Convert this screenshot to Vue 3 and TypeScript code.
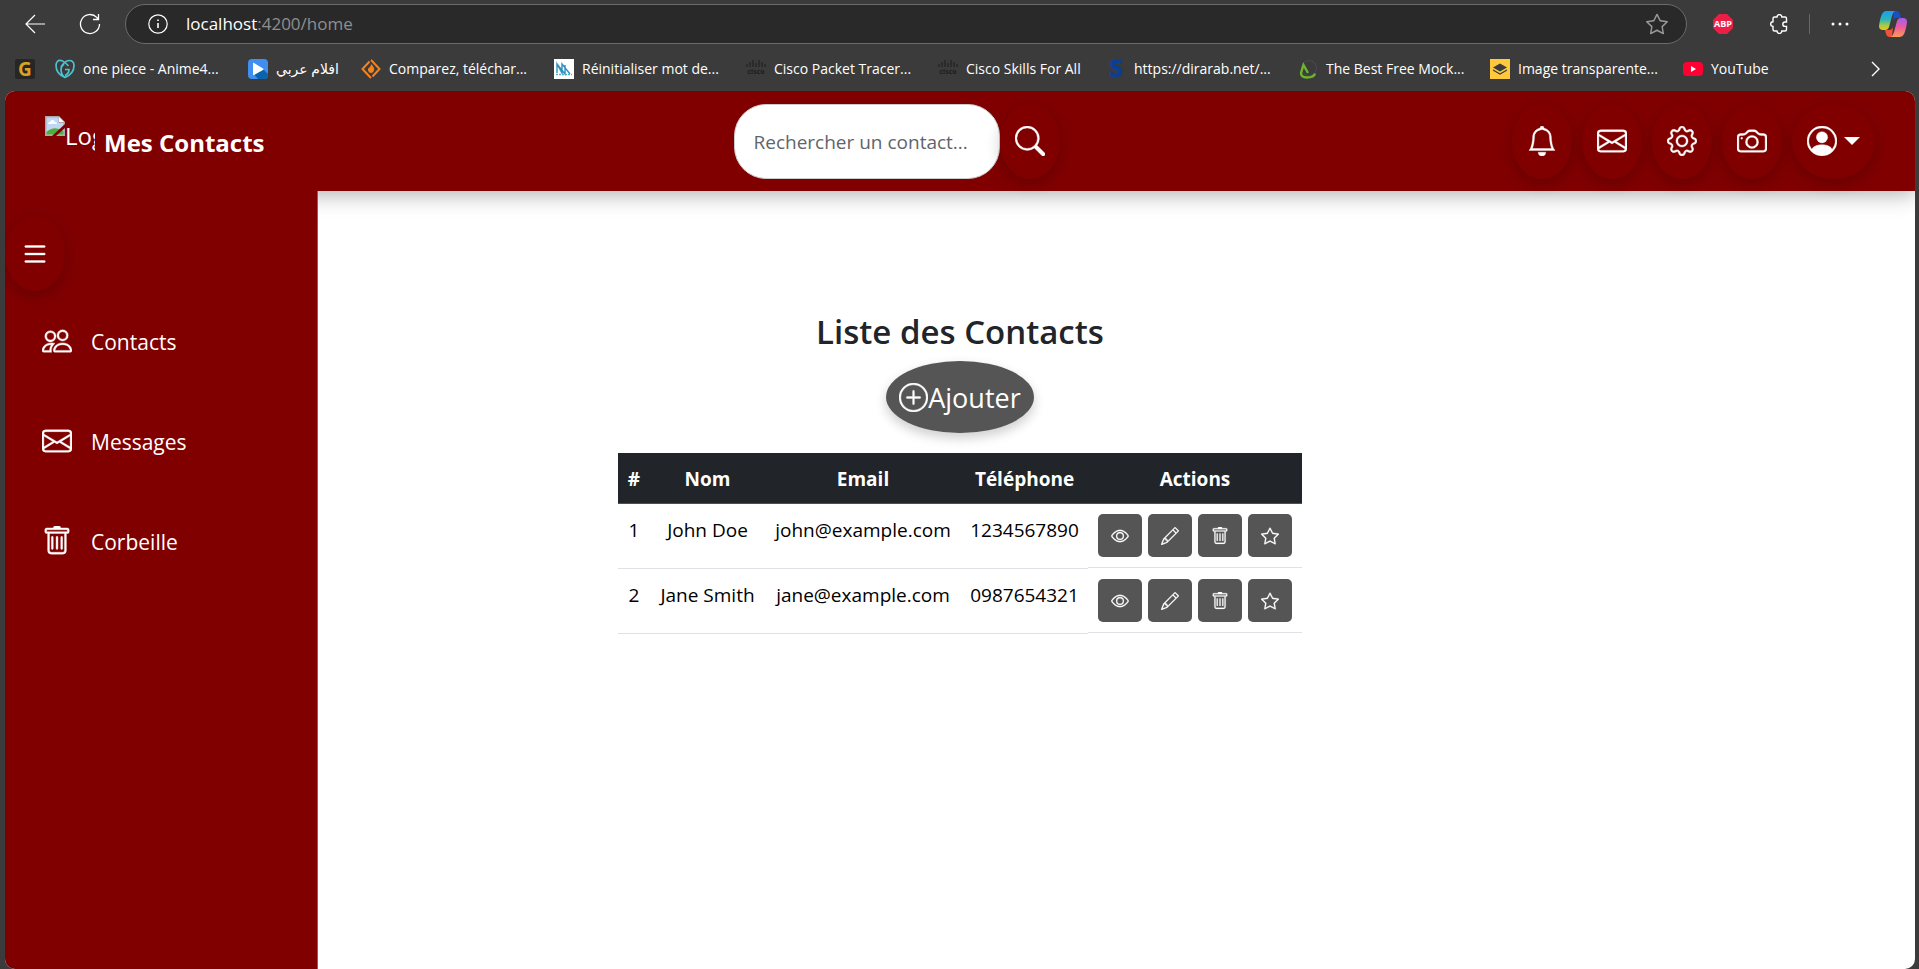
<script setup lang="ts">
import { ref } from 'vue'

interface Contact {
  id: number
  name: string
  email: string
  phone: string
}

interface Bookmark {
  label: string
  icon: string
  width: number
}

const icons: Record<string, string[]> = {
  list: ['M2.5 12a.5.5 0 0 1 .5-.5h10a.5.5 0 0 1 0 1H3a.5.5 0 0 1-.5-.5m0-4a.5.5 0 0 1 .5-.5h10a.5.5 0 0 1 0 1H3a.5.5 0 0 1-.5-.5m0-4a.5.5 0 0 1 .5-.5h10a.5.5 0 0 1 0 1H3a.5.5 0 0 1-.5-.5'],
  search: ['M11.742 10.344a6.5 6.5 0 1 0-1.397 1.398h-.001q.044.06.098.115l3.85 3.85a1 1 0 0 0 1.415-1.414l-3.85-3.85a1 1 0 0 0-.115-.1zM12 6.5a5.5 5.5 0 1 1-11 0 5.5 5.5 0 0 1 11 0'],
  bell: ['M8 16a2 2 0 0 0 2-2H6a2 2 0 0 0 2 2M8 1.918l-.797.161A4 4 0 0 0 4 6c0 .628-.134 2.197-.459 3.742-.16.767-.376 1.566-.663 2.258h10.244c-.287-.692-.502-1.49-.663-2.258C12.134 8.197 12 6.628 12 6a4 4 0 0 0-3.203-3.92zM14.22 12c.223.447.481.801.78 1H1c.299-.199.557-.553.78-1C2.68 10.2 3 6.88 3 6c0-2.42 1.72-4.44 4.005-4.901a1 1 0 1 1 1.99 0A5 5 0 0 1 13 6c0 .88.32 4.2 1.22 6'],
  envelope: ['M0 4a2 2 0 0 1 2-2h12a2 2 0 0 1 2 2v8a2 2 0 0 1-2 2H2a2 2 0 0 1-2-2zm2-1a1 1 0 0 0-1 1v.217l7 4.2 7-4.2V4a1 1 0 0 0-1-1zm13 2.383-4.708 2.825L15 11.105zm-.034 6.876-5.64-3.471L8 9.583l-1.326-.795-5.64 3.47A1 1 0 0 0 2 13h12a1 1 0 0 0 .966-.741M1 11.105l4.708-2.897L1 5.383z'],
  gear: [
    'M8 4.754a3.246 3.246 0 1 0 0 6.492 3.246 3.246 0 0 0 0-6.492M5.754 8a2.246 2.246 0 1 1 4.492 0 2.246 2.246 0 0 1-4.492 0',
    'M9.796 1.343c-.527-1.79-3.065-1.79-3.592 0l-.094.319a.873.873 0 0 1-1.255.52l-.292-.16c-1.64-.892-3.433.902-2.54 2.541l.159.292a.873.873 0 0 1-.52 1.255l-.319.094c-1.79.527-1.79 3.065 0 3.592l.319.094a.873.873 0 0 1 .52 1.255l-.16.292c-.892 1.64.901 3.434 2.541 2.54l.292-.159a.873.873 0 0 1 1.255.52l.094.319c.527 1.79 3.065 1.79 3.592 0l.094-.319a.873.873 0 0 1 1.255-.52l.292.16c1.64.893 3.434-.902 2.54-2.541l-.159-.292a.873.873 0 0 1 .52-1.255l.319-.094c1.79-.527 1.79-3.065 0-3.592l-.319-.094a.873.873 0 0 1-.52-1.255l.16-.292c.893-1.64-.902-3.433-2.541-2.54l-.292.159a.873.873 0 0 1-1.255-.52zm-2.633.283c.246-.835 1.428-.835 1.674 0l.094.319a1.873 1.873 0 0 0 2.693 1.115l.291-.16c.764-.415 1.6.42 1.184 1.185l-.159.292a1.873 1.873 0 0 0 1.116 2.692l.318.094c.835.246.835 1.428 0 1.674l-.319.094a1.873 1.873 0 0 0-1.115 2.693l.16.291c.415.764-.42 1.6-1.185 1.184l-.291-.159a1.873 1.873 0 0 0-2.693 1.116l-.094.318c-.246.835-1.428.835-1.674 0l-.094-.319a1.873 1.873 0 0 0-2.692-1.115l-.292.16c-.764.415-1.6-.42-1.184-1.185l.159-.291A1.873 1.873 0 0 0 1.945 8.93l-.319-.094c-.835-.246-.835-1.428 0-1.674l.319-.094A1.873 1.873 0 0 0 3.06 4.377l-.16-.292c-.415-.764.42-1.6 1.185-1.184l.292.159a1.873 1.873 0 0 0 2.692-1.115z',
  ],
  camera: [
    'M15 12a1 1 0 0 1-1 1H2a1 1 0 0 1-1-1V6a1 1 0 0 1 1-1h1.172a3 3 0 0 0 2.12-.879l.83-.828A1 1 0 0 1 6.827 3h2.344a1 1 0 0 1 .707.293l.828.828A3 3 0 0 0 12.828 5H14a1 1 0 0 1 1 1zM2 4a2 2 0 0 0-2 2v6a2 2 0 0 0 2 2h12a2 2 0 0 0 2-2V6a2 2 0 0 0-2-2h-1.172a2 2 0 0 1-1.414-.586l-.828-.828A2 2 0 0 0 9.172 2H6.828a2 2 0 0 0-1.414.586l-.828.828A2 2 0 0 1 3.172 4z',
    'M8 11a2.5 2.5 0 1 1 0-5 2.5 2.5 0 0 1 0 5m0 1a3.5 3.5 0 1 0 0-7 3.5 3.5 0 0 0 0 7M3 6.5a.5.5 0 1 1-1 0 .5.5 0 0 1 1 0',
  ],
  person: [
    'M11 6a3 3 0 1 1-6 0 3 3 0 0 1 6 0',
    'M0 8a8 8 0 1 1 16 0A8 8 0 0 1 0 8m8-7a7 7 0 0 0-5.468 11.37C3.242 11.226 4.805 10 8 10s4.757 1.225 5.468 2.37A7 7 0 0 0 8 1',
  ],
  people: ['M15 14s1 0 1-1-1-4-5-4-5 3-5 4 1 1 1 1zm-7.978-1L7 12.996c.001-.264.167-1.03.76-1.72C8.312 10.629 9.282 10 11 10c1.717 0 2.687.63 3.24 1.276.593.69.758 1.457.76 1.72l-.008.002-.014.002zM11 7a2 2 0 1 0 0-4 2 2 0 0 0 0 4m3-2a3 3 0 1 1-6 0 3 3 0 0 1 6 0M6.936 9.28a6 6 0 0 0-1.23-.247A7 7 0 0 0 5 9c-4 0-5 3-5 4q0 1 1 1h4.216A2.24 2.24 0 0 1 5 13c0-1.01.377-2.042 1.09-2.904.243-.294.526-.569.846-.816M4.92 10A5.5 5.5 0 0 0 4 13H1c0-.26.164-1.03.76-1.724.545-.636 1.492-1.256 3.16-1.275ZM1.5 5.5a3 3 0 1 1 6 0 3 3 0 0 1-6 0m3-2a2 2 0 1 0 0 4 2 2 0 0 0 0-4'],
  trash: [
    'M5.5 5.5A.5.5 0 0 1 6 6v6a.5.5 0 0 1-1 0V6a.5.5 0 0 1 .5-.5m2.5 0a.5.5 0 0 1 .5.5v6a.5.5 0 0 1-1 0V6a.5.5 0 0 1 .5-.5m3 .5a.5.5 0 0 0-1 0v6a.5.5 0 0 0 1 0z',
    'M14.5 3a1 1 0 0 1-1 1H13v9a2 2 0 0 1-2 2H5a2 2 0 0 1-2-2V4h-.5a1 1 0 0 1-1-1V2a1 1 0 0 1 1-1H6a1 1 0 0 1 1-1h2a1 1 0 0 1 1 1h3.5a1 1 0 0 1 1 1zM4.118 4 4 4.059V13a1 1 0 0 0 1 1h6a1 1 0 0 0 1-1V4.059L11.882 4zM2.5 3h11V2h-11z',
  ],
  plus: [
    'M8 15A7 7 0 1 1 8 1a7 7 0 0 1 0 14m0 1A8 8 0 1 0 8 0a8 8 0 0 0 0 16',
    'M8 4a.5.5 0 0 1 .5.5v3h3a.5.5 0 0 1 0 1h-3v3a.5.5 0 0 1-1 0v-3h-3a.5.5 0 0 1 0-1h3v-3A.5.5 0 0 1 8 4',
  ],
  eye: [
    'M16 8s-3-5.5-8-5.5S0 8 0 8s3 5.5 8 5.5S16 8 16 8M1.173 8a13 13 0 0 1 1.66-2.043C4.12 4.668 5.88 3.5 8 3.5s3.879 1.168 5.168 2.457A13 13 0 0 1 14.828 8q-.086.13-.195.288c-.335.48-.83 1.12-1.465 1.755C11.879 11.332 10.119 12.5 8 12.5s-3.879-1.168-5.168-2.457A13 13 0 0 1 1.172 8z',
    'M8 5.5a2.5 2.5 0 1 0 0 5 2.5 2.5 0 0 0 0-5M4.5 8a3.5 3.5 0 1 1 7 0 3.5 3.5 0 0 1-7 0',
  ],
  pencil: ['M12.146.146a.5.5 0 0 1 .708 0l3 3a.5.5 0 0 1 0 .708l-10 10a.5.5 0 0 1-.168.11l-5 2a.5.5 0 0 1-.65-.65l2-5a.5.5 0 0 1 .11-.168zM11.207 2.5 13.5 4.793 14.793 3.5 12.5 1.207zm1.586 3L10.5 3.207 4 9.707V10h.5a.5.5 0 0 1 .5.5v.5h.5a.5.5 0 0 1 .5.5v.5h.293zm-9.761 5.175-.106.106-1.528 3.821 3.821-1.528.106-.106A.5.5 0 0 1 5 12.5V12h-.5a.5.5 0 0 1-.5-.5V11h-.5a.5.5 0 0 1-.468-.325'],
  star: ['M2.866 14.85c-.078.444.36.791.746.593l4.39-2.256 4.389 2.256c.386.198.824-.149.746-.592l-.83-4.73 3.522-3.356c.33-.314.16-.888-.282-.95l-4.898-.696L8.465.792a.513.513 0 0 0-.927 0L5.354 5.12l-4.898.696c-.441.062-.612.636-.283.95l3.523 3.356-.83 4.73zm4.905-2.767-3.686 1.894.694-3.957a.56.56 0 0 0-.163-.505L1.71 6.745l4.052-.576a.53.53 0 0 0 .393-.288L8 2.223l1.847 3.658a.53.53 0 0 0 .393.288l4.052.575-2.906 2.77a.56.56 0 0 0-.163.506l.694 3.957-3.686-1.894a.5.5 0 0 0-.461 0z'],
}

const bookmarks: Bookmark[] = [
  { label: 'one piece - Anime4...', icon: 'heart', width: 193 },
  { label: 'افلام عربي', icon: 'play', width: 113 },
  { label: 'Comparez, téléchar...', icon: 'flame', width: 193 },
  { label: 'Réinitialiser mot de...', icon: 'chart', width: 192 },
  { label: 'Cisco Packet Tracer...', icon: 'cisco', width: 192 },
  { label: 'Cisco Skills For All', icon: 'cisco', width: 168 },
  { label: 'https://dirarab.net/...', icon: 's', width: 192 },
  { label: 'The Best Free Mock...', icon: 'green', width: 192 },
  { label: 'Image transparente...', icon: 'layers', width: 193 },
  { label: 'YouTube', icon: 'youtube', width: 90 },
]

const headerActions = [
  { icon: 'bell', label: 'Notifications' },
  { icon: 'envelope', label: 'Messages' },
  { icon: 'gear', label: 'Paramètres' },
  { icon: 'camera', label: 'Caméra' },
]

const menu = [
  { icon: 'people', label: 'Contacts' },
  { icon: 'envelope', label: 'Messages' },
  { icon: 'trash', label: 'Corbeille' },
]

const rowActions = [
  { icon: 'eye', label: 'Voir' },
  { icon: 'pencil', label: 'Modifier' },
  { icon: 'trash', label: 'Supprimer' },
  { icon: 'star', label: 'Favori' },
]

const contacts = ref<Contact[]>([
  { id: 1, name: 'John Doe', email: 'john@example.com', phone: '1234567890' },
  { id: 2, name: 'Jane Smith', email: 'jane@example.com', phone: '0987654321' },
])

const query = ref('')
</script>

<template>
  <div class="window">
    <div class="toolbar">
      <button class="tool back" aria-label="Retour">
        <svg width="20" height="20" viewBox="0 0 20 20" fill="none" stroke="#fff" stroke-width="1.2"><path d="M10 1 1 10l9 9M1 10h19" /></svg>
      </button>
      <button class="tool reload" aria-label="Actualiser">
        <svg width="22" height="22" viewBox="0 0 22 22" fill="none" stroke="#fff" stroke-width="1.3"><path d="M20.500 11a9.500 9.500 0 1 1-2.700-6.600L19 6M19.500 1v5.500H14" /></svg>
      </button>
      <div class="address">
        <svg width="20" height="20" viewBox="0 0 20 20" fill="none" stroke="#fff" stroke-width="1.2"><circle cx="10" cy="10" r="9.200" /><path d="M10 9v5M10 5.500v1.600" stroke-width="1.600" /></svg>
        <span class="url"><span class="host">localhost</span>:4200/home</span>
        <svg class="fav" width="22" height="22" viewBox="0 0 16 16" fill="#999"><path :d="icons.star[0]" /></svg>
      </div>
      <button class="tool abp" aria-label="Adblock">
        <svg width="20" height="20" viewBox="0 0 20 20"><path d="M6 0h8l6 6v8l-6 6H6l-6-6V6z" fill="#ed1e45" /><text x="10" y="13" text-anchor="middle" class="abp-text">ABP</text></svg>
      </button>
      <button class="tool puzzle" aria-label="Extensions">
        <svg width="20" height="20" viewBox="0 0 20 20" fill="none" stroke="#fff" stroke-width="1.400"><path d="M5.500 3H8a2.400 2.400 0 0 1 4.800 0h3.200q1.500 0 1.500 1.500V8h-1.500a2.200 2.200 0 0 0 0 4.400h1.500v3.100q0 1.500-1.500 1.500h-3.200a2.400 2.400 0 0 1-4.800 0H5.500Q4 17 4 15.500v-3.100a2.300 2.300 0 0 1 0-4.600V4.500Q4 3 5.500 3" /></svg>
      </button>
      <span class="divider"></span>
      <button class="tool dots" aria-label="Plus">
        <svg width="18" height="4" viewBox="0 0 18 4" fill="#fff"><circle cx="2" cy="2" r="1.500" /><circle cx="9" cy="2" r="1.500" /><circle cx="16" cy="2" r="1.500" /></svg>
      </button>
      <button class="tool copilot" aria-label="Copilot">
        <svg width="28" height="26" viewBox="0 0 28 26">
          <defs>
            <linearGradient id="cpa" x1="0" y1="0" x2="0" y2="1"><stop offset="0" stop-color="#1c9df0" /><stop offset=".45" stop-color="#2bb5b8" /><stop offset=".75" stop-color="#a5c94a" /><stop offset="1" stop-color="#f5c518" /></linearGradient>
            <linearGradient id="cpb" x1="0" y1="0" x2="0" y2="1"><stop offset="0" stop-color="#a45cf0" /><stop offset=".5" stop-color="#ee5d9a" /><stop offset="1" stop-color="#ff9a52" /></linearGradient>
          </defs>
          <path d="M15 0h3q2 0 3 3l1 4h-5q-2 0-3 3z" fill="#1b4fc4" />
          <path d="M7 0h9q-2 1-3 5l-3 11q-1 3-4 3H4q-4 0-4-4Q1 7 3 3 4.500 0 7 0z" fill="url(#cpa)" />
          <path d="M13 26H10q-2 0-3-3l-1-4h4q3 0 4-3z" fill="#f0523c" />
          <path d="M21 26h-9q2-1 3-5l3-11q1-3 4-3h2q4 0 4 4-1 8-3 12-1.500 3-4 3z" fill="url(#cpb)" />
        </svg>
      </button>
    </div>

    <nav class="bookmarks" aria-label="Favoris">
      <a class="bookmark g-mark" href="#" aria-label="G"><span class="g-icon">G</span></a>
      <a v-for="b in bookmarks" :key="b.label" class="bookmark" href="#" :style="{ width: b.width + 'px' }">
        <svg class="favicon" viewBox="0 0 20 20" width="20" height="20">
          <g v-if="b.icon === 'heart'" fill="none" stroke="#4cc3d0" stroke-width="1.700">
            <path d="M10 18.500C4 16 1 11 1 6.500 1 3 3 1 6 1.500q3 .5 7.500 5.500M6 8q4-6.500 8-6.500c3.500 0 5 2 5 5 0 5-3 9.500-9 12-3-2-4-5-4-8 0-2 1-4 3-5.500M10 10.500h4q0 4-4 6" />
          </g>
          <g v-else-if="b.icon === 'play'">
            <rect width="20" height="20" rx="4" fill="#3f8ff0" /><path d="M6 15 15 10l5 5v1a4 4 0 0 1-4 4h-6z" fill="#0a63ad" /><path d="M5 4.500v11q0 1 1 .5l9-5q1-1 0-1.500L6 4q-1-.5-1 .5z" fill="#fff" />
          </g>
          <g v-else-if="b.icon === 'flame'">
            <path d="M8.500 2.500 1.500 10l7 7.500M11.500 2.500l7 7.500-7 7.500M10 1l2.500 2.500M7.500 16.500 10 19" fill="none" stroke="#f58220" stroke-width="2" /><path d="M10 5q4 3.500 3 6.500-1 2.500-3 2.500t-3-2.500Q6.500 9 8.500 8.500 10 7.500 10 5z" fill="#f58220" />
          </g>
          <g v-else-if="b.icon === 'chart'">
            <rect width="20" height="20" fill="#fff" /><path d="M3 14V5l5 9V5l8 10M3 5l8 10V6" fill="none" stroke="#2f8fc0" stroke-width="1.400" /><path d="M2 15.500h16" stroke="#4db6c4" stroke-width="1.400" stroke-dasharray="2 1" />
          </g>
          <g v-else-if="b.icon === 'cisco'" fill="#1d1d1d">
            <path d="M1 5v3M4 3v5M7 1v7M10 4v4M13 1v7M16 3v5M19 5v3" stroke="#1d1d1d" stroke-width="1" /><text x="10" y="15" text-anchor="middle" class="cisco-text">cisco</text>
          </g>
          <text v-else-if="b.icon === 's'" x="10" y="18" text-anchor="middle" class="s-text">S</text>
          <g v-else-if="b.icon === 'green'" fill="none">
            <circle cx="11" cy="9" r="7.500" stroke="#4a4a4a" /><path d="M10 14 5.500 6 3 14q0 4.500 6 4.500 7 0 8-4" stroke="#6cb52d" stroke-width="2.400" />
          </g>
          <g v-else-if="b.icon === 'layers'">
            <rect width="20" height="20" fill="#ffc83d" /><path d="m10 4.500 7 4-7 4-7-4z" fill="#3b3b3b" /><path d="m3 11 7 4 7-4" fill="none" stroke="#3b3b3b" stroke-width="1.200" />
          </g>
          <g v-else>
            <rect y="3" width="20" height="14" rx="4" fill="#ff0033" /><path d="M8 7v6l5-3z" fill="#fff" />
          </g>
        </svg>
        <span>{{ b.label }}</span>
      </a>
      <button class="tool more" aria-label="Autres favoris">
        <svg width="10" height="16" viewBox="0 0 10 16" fill="none" stroke="#fff" stroke-width="1.400"><path d="m1 1 7 7-7 7" /></svg>
      </button>
    </nav>

    <div class="page">
      <header class="header">
        <a class="brand" href="#">
          <span class="logo">
            <svg width="20" height="20" viewBox="0 0 20 20">
              <path d="M0 0h14l6 6v14H0z" fill="#a9a9a9" /><path d="M1.500 1.500h12V7h5v11.500h-17z" fill="#bfd6f5" /><path d="M14 1v5h5z" fill="#fff" /><path d="M3 8q0-2 2-2 .5-2 2.500-2T10 6q2 0 2 2z" fill="#fff" /><path d="M1.500 18.500V16Q9 9 18.500 15v3.500z" fill="#4fb13c" /><path d="M20 8v4l-9 8H7z" fill="maroon" />
            </svg>
            <span class="alt">Log</span>
          </span>
          <strong>Mes Contacts</strong>
        </a>

        <form class="search" @submit.prevent>
          <input v-model="query" type="text" placeholder="Rechercher un contact..." aria-label="Rechercher un contact" />
          <button class="round" type="submit" aria-label="Rechercher">
            <svg class="icon" viewBox="0 0 16 16"><path v-for="d in icons.search" :key="d" :d="d" /></svg>
          </button>
        </form>

        <div class="actions">
          <button v-for="a in headerActions" :key="a.icon" class="round" :aria-label="a.label">
            <svg class="icon" viewBox="0 0 16 16"><path v-for="d in icons[a.icon]" :key="d" :d="d" /></svg>
          </button>
          <button class="round user" aria-label="Profil">
            <svg class="icon" viewBox="0 0 16 16"><path v-for="d in icons.person" :key="d" :d="d" fill-rule="evenodd" /></svg>
            <span class="caret"></span>
          </button>
        </div>
      </header>

      <div class="body">
        <aside class="sidebar">
          <button class="round" aria-label="Menu">
            <svg class="icon" viewBox="0 0 16 16"><path v-for="d in icons.list" :key="d" :d="d" /></svg>
          </button>
          <a v-for="m in menu" :key="m.label" class="item" href="#">
            <svg class="icon" viewBox="0 0 16 16"><path v-for="d in icons[m.icon]" :key="d" :d="d" /></svg>
            <span>{{ m.label }}</span>
          </a>
        </aside>

        <main class="content">
          <h2>Liste des Contacts</h2>
          <button class="add">
            <svg class="icon" viewBox="0 0 16 16"><path v-for="d in icons.plus" :key="d" :d="d" /></svg>
            <span>Ajouter</span>
          </button>
          <table>
            <colgroup>
              <col class="c-id" /><col class="c-name" /><col class="c-email" /><col class="c-phone" /><col class="c-actions" />
            </colgroup>
            <thead>
              <tr><th>#</th><th>Nom</th><th>Email</th><th>Téléphone</th><th>Actions</th></tr>
            </thead>
            <tbody>
              <tr v-for="c in contacts" :key="c.id">
                <td>{{ c.id }}</td>
                <td>{{ c.name }}</td>
                <td>{{ c.email }}</td>
                <td>{{ c.phone }}</td>
                <td class="row-actions">
                  <button v-for="a in rowActions" :key="a.icon" :aria-label="a.label">
                    <svg viewBox="0 0 16 16"><path v-for="d in icons[a.icon]" :key="d" :d="d" /></svg>
                  </button>
                </td>
              </tr>
            </tbody>
          </table>
        </main>
      </div>
    </div>
  </div>
</template>

<style>
body {
  background: #3b3b3b;
}
</style>

<style scoped>
.window,
.window * {
  box-sizing: border-box;
}

.window {
  display: flex;
  flex-direction: column;
  min-height: 100vh;
  background: #3b3b3b;
  color: #fff;
  font-family: "Open Sans", "Noto Sans", "DejaVu Sans", sans-serif;
  font-size: 19px;
}

button {
  padding: 0;
  border: 0;
  background: none;
  color: inherit;
  font: inherit;
  cursor: pointer;
}

a {
  color: inherit;
  text-decoration: none;
}

svg {
  display: block;
  flex: none;
}

.toolbar {
  display: flex;
  align-items: center;
  height: 48px;
  padding: 0 12px 0 25px;
}

.tool {
  flex: none;
}

.reload {
  margin-left: 34px;
}

.address {
  display: flex;
  flex: 1;
  align-items: center;
  height: 40px;
  margin-left: 24px;
  padding: 0 18px 0 22px;
  border: 1px solid #6b6b6b;
  border-radius: 20px;
  background: #292929;
}

.url {
  margin-left: 18px;
  padding-bottom: 2px;
  color: #8f8f8f;
  font-size: 17px;
}

.host {
  color: #fff;
}

.fav {
  margin-left: auto;
}

.abp {
  margin-left: 26px;
}

.abp-text {
  fill: #fff;
  font: 700 9px "Open Sans", sans-serif;
}

.puzzle {
  margin-left: 36px;
}

.divider {
  width: 1px;
  height: 20px;
  margin: 0 21px 0 20px;
  background: #666;
}

.copilot {
  margin-left: 30px;
}

.bookmarks {
  display: flex;
  align-items: center;
  height: 43px;
  padding: 0 38px 2px 15px;
  font-size: 14px;
}

.bookmark {
  display: flex;
  flex: none;
  align-items: center;
  gap: 8px;
  white-space: nowrap;
}

.g-mark {
  margin-right: 20px;
}

.g-icon {
  width: 20px;
  height: 20px;
  border-radius: 2px;
  background: #262626;
  color: #d9a520;
  font-size: 19px;
  font-weight: 700;
  line-height: 20px;
  text-align: center;
}

.favicon {
  overflow: visible;
}

.cisco-text {
  font: 700 7px "Open Sans", sans-serif;
}

.s-text {
  fill: #0b3f96;
  font: 800 24px "Open Sans", sans-serif;
}

.more {
  margin-left: auto;
}

.page {
  display: flex;
  flex: 1;
  flex-direction: column;
  margin: 0 4px 0 5px;
  border-radius: 10px;
  background: #fff;
  overflow: hidden;
}

.header {
  position: relative;
  z-index: 1;
  display: flex;
  align-items: center;
  justify-content: space-between;
  height: 100px;
  padding: 0 40px;
  background: maroon;
  box-shadow: 0 4px 20px rgba(0, 0, 0, 0.3);
}

.brand {
  display: flex;
  align-items: center;
  gap: 9px;
  min-width: 236px;
}

.brand strong {
  padding-top: 2px;
  font-size: 24px;
}

.logo {
  display: flex;
  width: 50px;
  height: 50px;
}

.alt {
  flex: 1;
  overflow: hidden;
  font-size: 24px;
  line-height: 40px;
}

.search {
  display: flex;
}

.search input {
  width: 266px;
  height: 75px;
  padding: 2px 30px 0 19px;
  border: 1px solid #ccc;
  border-radius: 32px;
  outline: 0;
  background: #fff;
  color: #212529;
  font: inherit;
}

.search input::placeholder {
  color: #5f656b;
  opacity: 1;
}

.icon {
  width: 30px;
  height: 30px;
  fill: currentColor;
  stroke: currentColor;
  stroke-width: 0.2px;
}

.round {
  display: flex;
  flex: none;
  align-items: center;
  justify-content: center;
  width: 60px;
  height: 75px;
  border-radius: 50%;
  box-shadow: 0 5px 15px rgba(0, 0, 0, 0.2);
}

.actions {
  display: flex;
  gap: 10px;
}

.user {
  gap: 7px;
  width: 83px;
}

.caret {
  border: 8px solid transparent;
  border-top-color: #fff;
  border-bottom: 0;
}

.body {
  display: flex;
  flex: 1;
}

.sidebar {
  position: relative;
  z-index: 2;
  flex: none;
  width: 313px;
  padding-top: 25px;
  border-right: 1px solid #6b6b6b;
  background: maroon;
}

.item {
  display: flex;
  align-items: center;
  gap: 19px;
  height: 100px;
  padding-left: 37px;
  font-size: 21px;
}

.item span {
  padding-top: 2px;
}

.content {
  display: flex;
  flex: 1;
  flex-direction: column;
  align-items: center;
  padding: 120px 313px 40px 0;
  color: #000;
}

h2 {
  margin: 0 0 8px;
  color: #212529;
  font-size: 33px;
  font-weight: 600;
  line-height: 42px;
}

.add {
  display: flex;
  align-items: center;
  height: 72px;
  margin-bottom: 20px;
  padding: 0 13px;
  border-radius: 50%;
  background: #555;
  box-shadow: 0 5px 12px rgba(0, 0, 0, 0.2);
  color: #fff;
  font-size: 27px;
}

.add .icon {
  width: 29px;
  height: 29px;
}

table {
  width: 684px;
  border-collapse: separate;
  border-spacing: 0;
  table-layout: fixed;
  text-align: center;
}

.c-id {
  width: 32px;
}

.c-name {
  width: 115px;
}

.c-email {
  width: 196px;
}

.c-phone {
  width: 127px;
}

th {
  height: 51px;
  padding: 2px 0 0;
  border-bottom: 1px solid #4d5154;
  background: #212529;
  color: #fff;
}

td {
  height: 65px;
  padding: 10px 0;
  border-bottom: 1px solid #dee2e6;
  line-height: 32px;
  vertical-align: top;
  white-space: nowrap;
}

.row-actions {
  display: flex;
  gap: 6px;
  height: 64px;
  padding: 10px;
}

.row-actions button {
  display: flex;
  align-items: center;
  justify-content: center;
  width: 44px;
  height: 43px;
  border-radius: 5px;
  background: #555;
  color: #fff;
}

.row-actions svg {
  width: 18px;
  height: 18px;
  fill: currentColor;
  stroke: currentColor;
  stroke-width: 0.2px;
}
</style>
